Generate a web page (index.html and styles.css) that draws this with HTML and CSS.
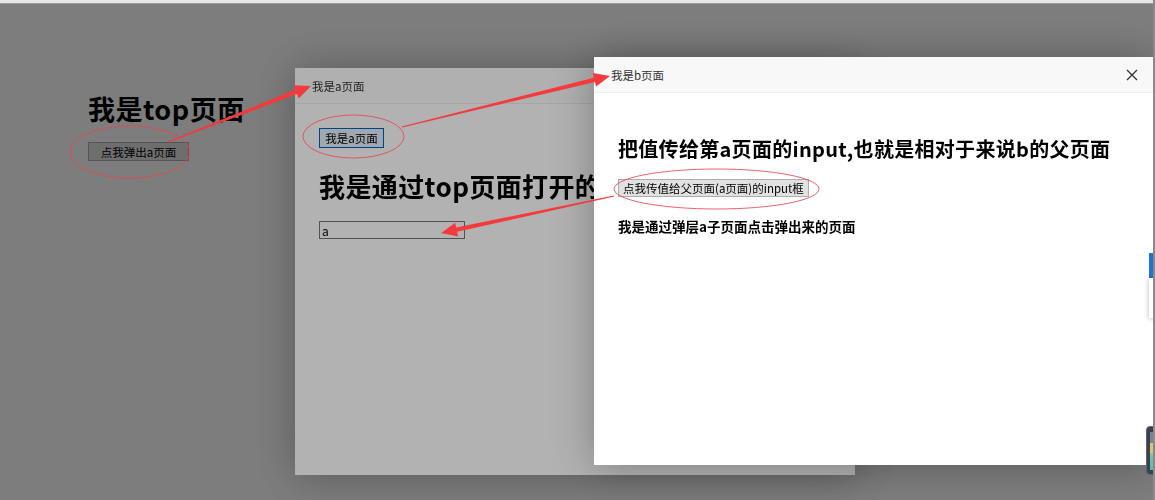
FILE: index.html
```html
<!DOCTYPE html>
<html lang="zh-CN">
<head>
    <meta charset="UTF-8">
    <title>top页面</title>
    <link rel="stylesheet" href="styles.css">
</head>
<body>
    <div class="chrome-edge"></div>

    <!-- top page -->
    <div class="top-page">
        <h1>我是top页面</h1>
        <button class="btn btn-open">点我弹出a页面</button>
    </div>

    <!-- layer a, opened from top -->
    <div class="shade"></div>
    <div class="layer layer-a">
        <div class="layer-title">我是a页面</div>
        <div class="layer-content">
            <button class="btn btn-focus">我是a页面</button>
            <h1>我是通过top页面打开的</h1>
            <input class="field" type="text" value="a">
        </div>
    </div>

    <!-- layer b, opened from a -->
    <div class="shade"></div>
    <div class="layer layer-b">
        <div class="layer-title">
            我是b页面
            <svg class="close" width="12" height="12" viewBox="0 0 12 12">
                <path d="M1 1 L11 11 M11 1 L1 11" stroke="#333" stroke-width="1.3" fill="none"/>
            </svg>
        </div>
        <div class="layer-content">
            <h2>把值传给第a页面的input,也就是相对于来说b的父页面</h2>
            <button class="btn btn-send">点我传值给父页面(a页面)的input框</button>
            <p class="note">我是通过弹层a子页面点击弹出来的页面</p>
        </div>
    </div>

    <!-- annotation marks -->
    <svg class="marks" id="marks" width="1155" height="500">
        <ellipse cx="130" cy="152" rx="60" ry="26" />
        <ellipse cx="353.5" cy="136.5" rx="50.5" ry="21.5" />
        <ellipse cx="716.5" cy="189" rx="102.5" ry="20" />
    </svg>

    <div class="side-tab"></div>
    <div class="side-panel"></div>
    <div class="speed-meter"><span></span></div>
    <div class="window-edge"></div>

    <script>
        // tapered arrows: [tail, tip]
        const arrows = [
            [[168, 142], [311, 86]],
            [[402, 127], [610, 76]],
            [[614, 196], [441, 233]]
        ];
        const marks = document.getElementById('marks');

        arrows.forEach(([t, p]) => {
            const dx = p[0] - t[0], dy = p[1] - t[1];
            const len = Math.hypot(dx, dy);
            const ux = dx / len, uy = dy / len;
            const nx = -uy, ny = ux;
            const headLen = 16, headW = 7, tailW = 0.6, neckW = 2.2;
            const bx = p[0] - ux * headLen, by = p[1] - uy * headLen;
            const pts = [
                [t[0] + nx * tailW, t[1] + ny * tailW],
                [bx + nx * neckW, by + ny * neckW],
                [bx + nx * headW, by + ny * headW],
                p,
                [bx - nx * headW, by - ny * headW],
                [bx - nx * neckW, by - ny * neckW],
                [t[0] - nx * tailW, t[1] - ny * tailW]
            ];
            const poly = document.createElementNS('http://www.w3.org/2000/svg', 'polygon');
            poly.setAttribute('points', pts.map(q => q[0].toFixed(1) + ',' + q[1].toFixed(1)).join(' '));
            poly.classList.add('arrow');
            marks.appendChild(poly);
        });
    </script>
</body>
</html>
```

FILE: styles.css
```css
body {
    margin: 0;
    background-color: #ffffff;
    color: #000000;
    font-family: "Noto Sans CJK SC", "Microsoft YaHei", sans-serif;
    width: 1155px;
    height: 500px;
    overflow: hidden;
}

.chrome-edge {
    position: fixed;
    top: 0;
    left: 0;
    right: 0;
    height: 3px;
    background-color: #e6e6e6;
    border-bottom: 1px solid #9c9c9c;
    z-index: 20;
}

/* top page */
.top-page {
    padding: 92px 0 0 88px;
}

.top-page h1 {
    margin: 0;
    font-size: 27px;
    line-height: 34px;
    letter-spacing: 0.5px;
    font-weight: bold;
}

.btn {
    display: block;
    font-family: inherit;
    font-size: 11.5px;
    line-height: 16px;
    color: #000000;
    background-color: #e1e1e1;
    border: 1px solid #adadad;
    border-radius: 0;
    padding: 0 6px;
    margin: 0;
}

.btn-open {
    margin-top: 16px;
    width: 101px;
    height: 19px;
}

.btn-focus {
    width: 65px;
    height: 20px;
    padding: 0;
    border-color: #0060c0;
    background-color: #e5f1fb;
}

.btn-send {
    height: 18px;
    padding: 0 4px;
}

/* layers */
.shade {
    position: fixed;
    top: 0;
    left: 0;
    width: 100%;
    height: 100%;
    background-color: rgba(0, 0, 0, 0.3);
}

.layer {
    position: fixed;
    background-color: #ffffff;
    box-shadow: 1px 1px 40px rgba(0, 0, 0, 0.3);
    overflow: hidden;
}

.layer-a {
    left: 295px;
    top: 68px;
    width: 560px;
    height: 407px;
}

.layer-b {
    left: 594px;
    top: 57px;
    width: 559px;
    height: 408px;
}

.layer-title {
    display: flex;
    align-items: center;
    justify-content: space-between;
    height: 35px;
    padding: 0 17px;
    background-color: #f8f8f8;
    border-bottom: 1px solid #eeeeee;
    color: #333333;
    font-size: 11.5px;
}

.layer-a .layer-title {
    background-color: #fcfcfc;
}

.layer-b .layer-title {
    padding-right: 15px;
}

.layer-content {
    padding: 24px;
}

.layer-a .layer-content {
    padding-top: 24px;
}

.layer-a h1 {
    margin: 21px 0 18px;
    font-size: 26px;
    line-height: 34px;
    letter-spacing: 0.4px;
    white-space: nowrap;
}

.field {
    display: block;
    box-sizing: border-box;
    width: 146px;
    height: 18px;
    margin: 0;
    padding: 0 2px;
    border: 1px solid #767676;
    font-family: inherit;
    font-size: 12px;
    background-color: #ffffff;
}

.layer-b .layer-content {
    padding-top: 42px;
}

.layer-b h2 {
    margin: 0 0 16px;
    font-size: 20px;
    line-height: 28px;
    letter-spacing: 0.3px;
    white-space: nowrap;
}

.note {
    margin: 19px 0 0;
    font-size: 13.5px;
    line-height: 20px;
    font-weight: bold;
}

/* annotations */
.marks {
    position: fixed;
    top: 0;
    left: 0;
    pointer-events: none;
}

.marks ellipse {
    fill: none;
    stroke: rgba(232, 70, 82, 0.85);
    stroke-width: 1;
}

.marks .arrow {
    fill: #f43a3c;
}

/* desktop widgets at the right edge */
.side-tab {
    position: fixed;
    left: 1149px;
    top: 253px;
    width: 10px;
    height: 25px;
    background-color: #1f74d3;
}

.side-panel {
    position: fixed;
    left: 1149px;
    top: 278px;
    width: 10px;
    height: 40px;
    background-color: #ffffff;
    box-shadow: -1px 1px 4px rgba(0, 0, 0, 0.2);
}

.speed-meter {
    position: fixed;
    left: 1146px;
    top: 426px;
    width: 12px;
    height: 49px;
    box-sizing: border-box;
    background-color: #3a404e;
    border: 1px solid #5c6476;
    border-radius: 4px 0 0 4px;
}

.speed-meter span {
    position: absolute;
    left: 3px;
    top: 5px;
    width: 3px;
    height: 38px;
    background: linear-gradient(#7d8494 0%, #7d8494 28%, #d8c670 30%, #d8c670 55%, #79c7a2 57%, #5fb8b0 100%);
}

.window-edge {
    position: fixed;
    top: 0;
    right: 0;
    width: 2px;
    height: 100%;
    background-color: #8a8a8a;
    z-index: 20;
}
```
